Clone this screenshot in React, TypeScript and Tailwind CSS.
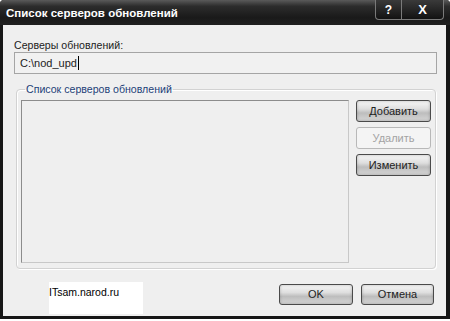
import React from "react";

const ui = { fontFamily: '"Liberation Sans", Arial, sans-serif' };

function Btn({ children, disabled, w, h }: { children: React.ReactNode; disabled?: boolean; w: string; h: string }) {
  return (
    <div
      className={
        "flex items-center justify-center rounded-[3px] border text-[11px] " +
        w +
        " " +
        h +
        " " +
        (disabled
          ? "border-[#b8b8b8] bg-[#f4f4f4] text-[#a3a3a3]"
          : "border-[#4a4a4a] bg-[linear-gradient(to_bottom,#f7f7f7_0%,#dedede_40%,#bdbdbd_60%,#d6d6d6_100%)] text-[#222] shadow-[inset_0_0_3px_rgba(0,0,0,0.25)]")
      }
    >
      {children}
    </div>
  );
}

export default function App() {
  return (
    <div className="w-[450px] h-[321px] bg-white" style={ui}>
      <div className="w-[450px] h-[319px] flex flex-col bg-[#161616] rounded-t-[4px]">
        {/* title bar */}
        <div className="h-[25px] flex items-start bg-[linear-gradient(to_bottom,#5a5a5a_0%,#2c2c2c_25%,#1a1a1a_70%,#202020_100%)] rounded-t-[4px]">
          <div className="pl-[6px] pt-[6px] text-white font-bold text-[11.5px] leading-[14px]">
            Список серверов обновлений
          </div>
          <div className="ml-auto mr-[6px] flex">
            <div className="w-[27px] h-[20px] flex items-center justify-center border border-[#7a7a7a] border-t-0 rounded-bl-[4px] bg-[linear-gradient(to_bottom,#3a3a3a,#121212)] text-white font-bold text-[12px]">
              ?
            </div>
            <div className="w-[42px] h-[20px] flex items-center justify-center border border-l-0 border-[#7a7a7a] border-t-0 rounded-br-[4px] bg-[linear-gradient(to_bottom,#3a3a3a,#121212)] text-white font-bold text-[13px]">
              X
            </div>
          </div>
        </div>
        {/* client */}
        <div className="flex-1 ml-[3px] mr-[4px] mb-[3px] bg-[#efefef] flex flex-col">
          <div className="pl-[11px] pt-[13px] text-[10.6px] leading-[14px] text-[#222]">Серверы обновлений:</div>
          <div className="ml-[11px] w-[423px] h-[22px] border border-[#a5a5a5] bg-[#f1f1f1] flex items-center pl-[5px] text-[11px] text-[#222]">
            C:\nod_upd<span className="inline-block w-[1px] h-[14px] bg-black ml-[1px]" />
          </div>
          <fieldset className="ml-[13px] mt-[8px] w-[417px] h-[187px] border border-[#d2d2d2] rounded-[4px] shadow-[inset_1px_1px_0_#ffffff,1px_1px_0_#ffffff] px-[4px] pb-[5px] pt-[4px] flex">
            <legend className="ml-[4px] px-[1px] text-[10.6px] leading-[14px] text-[#1d3f78]">Список серверов обновлений</legend>
            <div className="flex gap-[7px] w-full h-full">
              <div className="w-[328px] h-[163px] border border-[#8c8c8c] border-r-[#c8c8c8] border-b-[#c8c8c8] bg-[#efefef]" />
              <div className="flex flex-col gap-[5px]">
                <Btn w="w-[75px]" h="h-[22px]">Добавить</Btn>
                <Btn w="w-[75px]" h="h-[22px]" disabled>Удалить</Btn>
                <Btn w="w-[75px]" h="h-[22px]">Изменить</Btn>
              </div>
            </div>
          </fieldset>
          <div className="flex items-start mt-[13px]">
            <div className="ml-[46px] w-[94px] h-[32px] bg-white text-[10.5px] leading-[14px] text-black pt-[3px]">ITsam.narod.ru</div>
            <div className="ml-[136px] mt-[2px] flex gap-[8px]">
              <Btn w="w-[74px]" h="h-[21px]">OK</Btn>
              <Btn w="w-[73px]" h="h-[21px]">Отмена</Btn>
            </div>
          </div>
        </div>
      </div>
    </div>
  );
}
